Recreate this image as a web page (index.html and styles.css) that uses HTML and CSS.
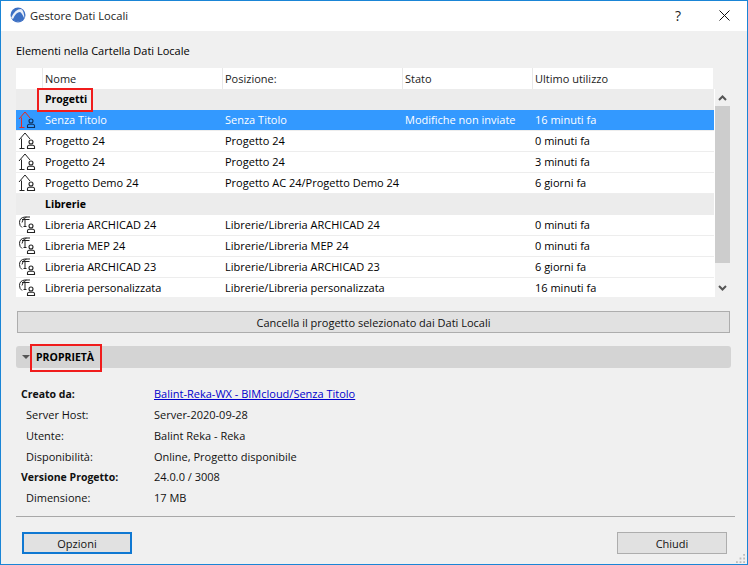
FILE: index.html
```html
<!DOCTYPE html>
<html lang="it">
<head>
<meta charset="utf-8">
<title>Gestore Dati Locali</title>
<link rel="stylesheet" href="styles.css">
</head>
<body>
<svg class="defs" width="0" height="0">
  <defs>
    <symbol id="person" viewBox="0 0 10 11">
      <circle cx="5" cy="3" r="2" fill="none" stroke="currentColor" stroke-width="1.1"/>
      <path d="M1.5 9.5V7.8Q1.5 6.4 3 6.2H7Q8.5 6.4 8.5 7.8V9.5Z" fill="none" stroke="currentColor" stroke-width="1.1"/>
    </symbol>
    <symbol id="house" viewBox="0 0 16 18">
      <path d="M1 8L7 1L12 7M3.5 6.5V16.5M1.5 16.5H6.5" fill="none" stroke="currentColor" stroke-width="1"/>
    </symbol>
    <symbol id="lib" viewBox="0 0 12 13">
      <path d="M3 11.5Q.5 10 .5 6.5Q.5 1.5 6 1H11M3 3.5H10.5M6 3.5V10.5M4.5 10.5H7.5M7.5 1.2Q3.5 2 3 6.5" fill="none" stroke="currentColor" stroke-width="1"/>
    </symbol>
  </defs>
</svg>
<main class="window">
  <header class="titlebar">
    <svg class="logo" width="16" height="16" viewBox="0 0 16 16">
      <circle cx="8" cy="8" r="7.5" fill="#3b6fc4"/>
      <path d="M1 11Q5 2 11 2Q14 3 14.5 12Q12 6 10 5Q6 5 3 12Z" fill="#e8eef8"/>
      <path d="M3 13Q8 16 13 13L8 15Z" fill="#9fb4d8"/>
    </svg>
    <span class="title">Gestore Dati Locali</span>
    <span class="help">?</span>
    <svg class="close" width="11" height="11" viewBox="0 0 11 11"><path d="M.5 .5L10.5 10.5M10.5 .5L.5 10.5" stroke="#111" fill="none"/></svg>
  </header>
  <div class="body">
    <p class="intro">Elementi nella Cartella Dati Locale</p>
    <div class="list-head">
      <span class="hcell hicon"></span>
      <span class="hcell">Nome</span>
      <span class="hcell">Posizione:</span>
      <span class="hcell">Stato</span>
      <span class="hcell last">Ultimo utilizzo</span>
    </div>
    <div class="list-wrap">
      <div class="list">
        <div class="group"><span class="gname marked">Progetti</span></div>
        <div class="row selected">
          <span class="ic"><svg class="i-house red" width="16" height="18"><use href="#house"/></svg><svg class="i-person navy" width="10" height="11"><use href="#person"/></svg></span>
          <span>Senza Titolo</span><span>Senza Titolo</span><span>Modifiche non inviate</span><span>16 minuti fa</span>
        </div>
        <div class="row">
          <span class="ic"><svg class="i-house" width="16" height="18"><use href="#house"/></svg><svg class="i-person" width="10" height="11"><use href="#person"/></svg></span>
          <span>Progetto 24</span><span>Progetto 24</span><span></span><span>0 minuti fa</span>
        </div>
        <div class="row">
          <span class="ic"><svg class="i-house" width="16" height="18"><use href="#house"/></svg><svg class="i-person" width="10" height="11"><use href="#person"/></svg></span>
          <span>Progetto 24</span><span>Progetto 24</span><span></span><span>3 minuti fa</span>
        </div>
        <div class="row">
          <span class="ic"><svg class="i-house" width="16" height="18"><use href="#house"/></svg><svg class="i-person" width="10" height="11"><use href="#person"/></svg></span>
          <span>Progetto Demo 24</span><span>Progetto AC 24/Progetto Demo 24</span><span></span><span>6 giorni fa</span>
        </div>
        <div class="group"><span class="gname">Librerie</span></div>
        <div class="row">
          <span class="ic"><svg class="i-lib" width="12" height="13"><use href="#lib"/></svg><svg class="i-person" width="10" height="11"><use href="#person"/></svg></span>
          <span>Libreria ARCHICAD 24</span><span>Librerie/Libreria ARCHICAD 24</span><span></span><span>0 minuti fa</span>
        </div>
        <div class="row">
          <span class="ic"><svg class="i-lib" width="12" height="13"><use href="#lib"/></svg><svg class="i-person" width="10" height="11"><use href="#person"/></svg></span>
          <span>Libreria MEP 24</span><span>Librerie/Libreria MEP 24</span><span></span><span>0 minuti fa</span>
        </div>
        <div class="row">
          <span class="ic"><svg class="i-lib" width="12" height="13"><use href="#lib"/></svg><svg class="i-person" width="10" height="11"><use href="#person"/></svg></span>
          <span>Libreria ARCHICAD 23</span><span>Librerie/Libreria ARCHICAD 23</span><span></span><span>6 giorni fa</span>
        </div>
        <div class="row end">
          <span class="ic"><svg class="i-lib" width="12" height="13"><use href="#lib"/></svg><svg class="i-person" width="10" height="11"><use href="#person"/></svg></span>
          <span>Libreria personalizzata</span><span>Librerie/Libreria personalizzata</span><span></span><span>16 minuti fa</span>
        </div>
      </div>
      <div class="scrollbar">
        <svg class="arrow up" width="9" height="6" viewBox="0 0 9 6"><path d="M1 5L4.5 1.5L8 5" fill="none" stroke="#555" stroke-width="2"/></svg>
        <div class="track"><div class="thumb"></div></div>
        <svg class="arrow down" width="9" height="6" viewBox="0 0 9 6"><path d="M1 1L4.5 4.5L8 1" fill="none" stroke="#555" stroke-width="2"/></svg>
      </div>
    </div>
    <button class="wide-btn">Cancella il progetto selezionato dai Dati Locali</button>
    <div class="section">
      <span class="tri"></span>
      <span class="section-name">PROPRIETÀ</span>
    </div>
    <dl class="props">
      <dt class="strong">Creato da:</dt><dd><a href="#">Balint-Reka-WX - BIMcloud/Senza Titolo</a></dd>
      <dt>Server Host:</dt><dd>Server-2020-09-28</dd>
      <dt>Utente:</dt><dd>Balint Reka - Reka</dd>
      <dt>Disponibilità:</dt><dd>Online, Progetto disponibile</dd>
      <dt class="strong">Versione Progetto:</dt><dd>24.0.0 / 3008</dd>
      <dt>Dimensione:</dt><dd>17 MB</dd>
    </dl>
    <hr class="rule">
    <footer class="actions">
      <button class="btn primary">Opzioni</button>
      <button class="btn">Chiudi</button>
    </footer>
    <svg class="grip" width="9" height="9" viewBox="0 0 10 10"><path d="M8 0h2v2H8zM4 4h2v2H4zM8 4h2v2H8zM0 8h2v2H0zM4 8h2v2H4zM8 8h2v2H8z" fill="#bbb"/></svg>
  </div>
</main>
</body>
</html>
```
FILE: styles.css
```css
*, *::before, *::after { box-sizing: border-box; }
html, body { margin: 0; padding: 0; }
body {
  width: 748px;
  height: 565px;
  overflow: hidden;
  font-family: "Open Sans", "Noto Sans", sans-serif;
  font-size: 11px;
  color: #000;
  background: #f0f0f0;
}
.defs { position: absolute; }
.window {
  width: 748px;
  height: 565px;
  border: 1px solid #1a85d6;
  display: flex;
  flex-direction: column;
  background: #f0f0f0;
}
.titlebar {
  height: 30px;
  flex: none;
  background: #fff;
  display: flex;
  align-items: center;
  padding: 0 0 2px 9px;
}
.logo { flex: none; margin-right: 4px; }
.title { font-size: 11.2px; color: #222; flex: 1; }
.help { font-size: 14px; color: #222; margin-right: 38px; }
.close { margin-right: 17px; }
.body {
  position: relative;
  flex: 1;
  padding: 0 0 0 15px;
  display: flex;
  flex-direction: column;
}
.intro { margin: 12px 0 0; height: 25px; line-height: 15px; }
.list-head {
  display: grid;
  grid-template-columns: 26px 180px 180px 130px 181px;
  width: 697px;
  height: 21px;
  background: #fff;
}
.hcell {
  padding-left: 2px;
  line-height: 22px;
  border-left: 1px solid #e8e8e8;
  color: #222;
}
.hicon { border-left: 0; }
.list-wrap { display: flex; height: 208px; width: 715px; }
.list { width: 699px; background: #fff; flex: none; }
.group {
  width: 698px;
  height: 21px;
  background: #ececec;
  padding-left: 29px;
  line-height: 20px;
  font-weight: 700;
  font-size: 10.5px;
}
.row {
  display: grid;
  grid-template-columns: 26px 180px 180px 130px 182px;
  width: 698px;
  height: 21px;
  border-bottom: 1px solid #ededed;
  line-height: 20px;
}
.row > span { padding-left: 3px; white-space: nowrap; }
.row .ic { position: relative; padding: 0; }
.row.end { height: 19px; border-bottom: 0; }
.row.selected { background: #3399ff; color: #fff; }
.i-house { position: absolute; left: 2px; top: 1px; color: #222; }
.i-house.red { color: #e8281e; }
.i-lib { position: absolute; left: 3px; top: 1px; color: #222; }
.i-person { position: absolute; left: 10px; top: 8px; color: #222; }
.i-person.navy { color: #10305a; }
.scrollbar {
  width: 15px;
  height: 208px;
  display: flex;
  flex-direction: column;
  align-items: center;
}
.arrow { flex: none; }
.arrow.up { margin-top: 6px; }
.arrow.down { margin-bottom: 6px; }
.track { flex: 1; width: 15px; padding-top: 5px; }
.thumb { height: 157px; background: #cdcdcd; }
.wide-btn {
  width: 713px;
  height: 22px;
  margin: 14px 0 0 1px;
  padding: 0;
  background: #e1e1e1;
  border: 1px solid #adadad;
  font: inherit;
  color: #111;
}
.section {
  width: 715px;
  height: 22px;
  margin-top: 13px;
  background: #d4d4d4;
  border-radius: 3px;
  display: flex;
  align-items: center;
  padding-left: 6px;
}
.tri {
  width: 0;
  height: 0;
  border: 4px solid transparent;
  border-top: 4px solid #555;
  border-bottom: 0;
  margin-right: 6px;
}
.section-name {
  position: relative;
  font-weight: 700;
  font-size: 10.5px;
}
.section-name::after {
  content: "";
  position: absolute;
  left: -6px;
  top: -6px;
  width: 72px;
  height: 28px;
  border: 2px solid #f01c1c;
}
.gname { position: relative; }
.gname.marked::after {
  content: "";
  position: absolute;
  left: -8px;
  top: -4px;
  width: 56px;
  height: 24px;
  border: 2px solid #f01c1c;
}
.props {
  display: grid;
  grid-template-columns: 133px 1fr;
  grid-template-rows: repeat(3, 21px) 20px 21px 21px;
  margin: 16px 0 0 5px;
  line-height: 19px;
  height: 125px;
}
.props dt { padding-left: 5px; color: #111; }
.props dt.strong { padding-left: 0; font-weight: 700; font-size: 10.5px; line-height: 21px; }
.props dd { margin: 0; color: #111; }
.props a { color: #00c; text-decoration: underline; }
.rule {
  width: 719px;
  margin: 7px 0 0 0;
  height: 1px;
  border: 0;
  background: #a8a8a8;
  flex: none;
}
.actions {
  display: flex;
  justify-content: space-between;
  width: 705px;
  margin: 15px 0 0 6px;
}
.btn {
  width: 110px;
  height: 22px;
  padding: 0;
  background: #e1e1e1;
  border: 1px solid #adadad;
  font: inherit;
  color: #111;
}
.btn.primary { border: 2px solid #0f78d2; }
.grip { position: absolute; right: 2px; bottom: 1px; }
```
